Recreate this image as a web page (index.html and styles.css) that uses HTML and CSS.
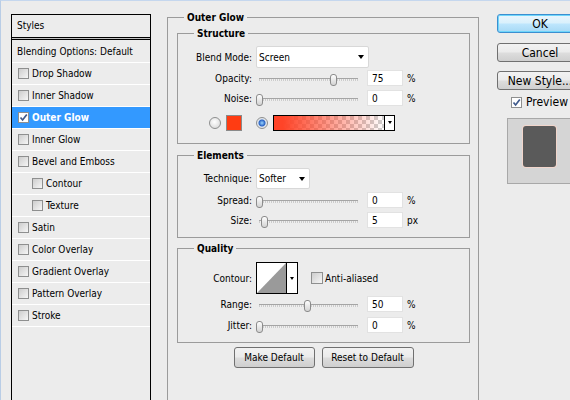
FILE: index.html
```html
<!DOCTYPE html>
<html>
<head>
<meta charset="utf-8">
<link rel="stylesheet" href="styles.css">
</head>
<body>
<div class="dialog">
  <div class="styles-panel">
    <div class="panel-head">Styles</div>
    <div class="panel-rule"></div>
    <ul class="style-list">
      <li class="item item-blend">Blending Options: Default</li>
      <li class="item"><span class="cb"></span>Drop Shadow</li>
      <li class="item"><span class="cb"></span>Inner Shadow</li>
      <li class="item selected"><span class="cb checked"><svg width="9" height="9" viewBox="0 0 9 9"><path d="M1.5 4.5 L3.6 7 L7.8 1.5" fill="none" stroke="#3f5a8c" stroke-width="1.7"/></svg></span>Outer Glow</li>
      <li class="item"><span class="cb"></span>Inner Glow</li>
      <li class="item"><span class="cb"></span>Bevel and Emboss</li>
      <li class="item sub"><span class="cb"></span>Contour</li>
      <li class="item sub"><span class="cb"></span>Texture</li>
      <li class="item"><span class="cb"></span>Satin</li>
      <li class="item"><span class="cb"></span>Color Overlay</li>
      <li class="item"><span class="cb"></span>Gradient Overlay</li>
      <li class="item"><span class="cb"></span>Pattern Overlay</li>
      <li class="item"><span class="cb"></span>Stroke</li>
    </ul>
  </div>

  <div class="main">
    <div class="group outer">
      <div class="group-title">Outer Glow</div>

      <div class="group inner structure">
        <div class="group-title">Structure</div>
        <div class="row row-select">
          <span class="label">Blend Mode:</span>
          <div class="select select-blend"><span>Screen</span><span class="arrow"></span></div>
        </div>
        <div class="row">
          <span class="label">Opacity:</span>
          <div class="slider"><div class="track"></div><div class="thumb" style="left:74px"></div></div>
          <div class="num">75</div><span class="unit">%</span>
        </div>
        <div class="row">
          <span class="label">Noise:</span>
          <div class="slider"><div class="track"></div><div class="thumb" style="left:0px"></div></div>
          <div class="num">0</div><span class="unit">%</span>
        </div>
        <div class="row row-color">
          <span class="radio"></span>
          <span class="swatch"></span>
          <span class="radio on"></span>
          <div class="gradient"><div class="gradient-fill"></div><div class="gradient-btn"><span class="arrow-sm"></span></div></div>
        </div>
      </div>

      <div class="group inner elements">
        <div class="group-title">Elements</div>
        <div class="row row-tech">
          <span class="label">Technique:</span>
          <div class="select select-tech"><span>Softer</span><span class="arrow"></span></div>
        </div>
        <div class="row row-spread">
          <span class="label">Spread:</span>
          <div class="slider"><div class="track"></div><div class="thumb" style="left:0px"></div></div>
          <div class="num">0</div><span class="unit">%</span>
        </div>
        <div class="row">
          <span class="label">Size:</span>
          <div class="slider"><div class="track"></div><div class="thumb" style="left:5px"></div></div>
          <div class="num">5</div><span class="unit">px</span>
        </div>
      </div>

      <div class="group inner quality">
        <div class="group-title">Quality</div>
        <div class="row row-contour">
          <span class="label">Contour:</span>
          <div class="contour">
            <div class="contour-graph"><svg width="29" height="30" viewBox="0 0 29 30"><polygon points="0,30 29,0 29,30" fill="#9a9a9a"/></svg></div>
            <div class="contour-btn"><span class="arrow-sm"></span></div>
          </div>
          <span class="cb cb-lg"></span><span class="check-label">Anti-aliased</span>
        </div>
        <div class="row">
          <span class="label">Range:</span>
          <div class="slider"><div class="track"></div><div class="thumb" style="left:48px"></div></div>
          <div class="num">50</div><span class="unit">%</span>
        </div>
        <div class="row row-jitter">
          <span class="label">Jitter:</span>
          <div class="slider"><div class="track"></div><div class="thumb" style="left:0px"></div></div>
          <div class="num">0</div><span class="unit">%</span>
        </div>
      </div>

      <div class="btn-row">
        <button class="btn btn-make">Make Default</button>
        <button class="btn btn-reset">Reset to Default</button>
      </div>
    </div>
  </div>

  <div class="side">
    <button class="btn side-btn ok">OK</button>
    <button class="btn side-btn cancel">Cancel</button>
    <button class="btn side-btn newstyle">New Style...</button>
    <div class="preview"><span class="cb checked"><svg width="9" height="9" viewBox="0 0 9 9"><path d="M1.5 4.5 L3.6 7 L7.8 1.5" fill="none" stroke="#3f5a8c" stroke-width="1.7"/></svg></span><span>Preview</span></div>
    <div class="preview-box"><div class="preview-shape"></div></div>
  </div>
</div>
</body>
</html>
```

FILE: styles.css
```css
* { box-sizing: border-box; }
html, body { margin: 0; padding: 0; }
body {
  width: 570px;
  height: 400px;
  overflow: hidden;
  background: #ececec;
  border-top: 1px solid #c5d7ee;
  border-left: 1px solid #b9cde6;
  font-family: "DejaVu Sans Condensed", "DejaVu Sans", sans-serif;
  font-stretch: semi-condensed;
  font-size: 10px;
  color: #000;
}

.dialog { display: flex; align-items: flex-start; height: 100%; }

/* left styles list */
.styles-panel {
  flex: none;
  margin: 13px 0 0 10px;
  width: 140px;
  height: 420px;
  border: 1px solid #000;
}
.panel-head { height: 23px; line-height: 22px; padding-left: 5px; border-bottom: 1px solid #000; }
.panel-rule { height: 1px; background: #c0c0c0; }
.style-list { list-style: none; margin: 0; padding: 0; border-top: 1px solid #000; }
.item {
  display: flex;
  align-items: center;
  height: 22px;
  padding-left: 6px;
  border-bottom: 1px solid #fff;
  white-space: nowrap;
}
.item-blend { height: 23px; padding-left: 5px; }
.item.sub { padding-left: 20px; }
.item.selected { background: #3399ff; color: #fff; font-weight: bold; }

.cb {
  flex: none;
  width: 11px;
  height: 11px;
  margin-right: 3px;
  border: 1px solid #8e8f8f;
  background: linear-gradient(135deg, #cdcdcd, #f6f6f6);
}
.cb.checked { background: #fff; display: flex; align-items: center; justify-content: center; }
.cb-lg { width: 12px; height: 12px; margin: 0 2px 0 13px; }

/* main area */
.main { flex: none; margin: 16px 0 0 16px; width: 312px; }
.group { border: 1px solid #9b9b9b; }
.group-title {
  width: fit-content;
  margin-top: -7px;
  padding: 0 3px;
  line-height: 13px;
  font-weight: bold;
  background: #ececec;
  white-space: nowrap;
}
.outer { padding: 0 8px 0 9px; height: 420px; }
.outer > .group-title { margin-left: 7px; }
.inner > .group-title { margin-left: 16px; margin-bottom: 6px; }
.structure { margin-top: 9px; padding-bottom: 12px; }
.elements { margin-top: 11px; padding-bottom: 7px; }
.quality { margin-top: 10px; padding-bottom: 7px; }
.quality > .group-title { margin-bottom: 7px; }

.row { display: flex; align-items: center; height: 20px; white-space: nowrap; }
.row-select { height: 22px; }
.row-tech { height: 21px; }
.row-spread, .row-jitter { margin-top: 1px; }
.row-color { height: 17px; margin-top: 6px; padding-left: 31px; }
.row-contour { height: 32px; }
.label { flex: none; width: 74px; margin-right: 4px; text-align: right; }

.select {
  flex: none;
  display: flex;
  align-items: center;
  justify-content: space-between;
  height: 22px;
  padding: 0 4px 0 2px;
  background: #fff;
  border: 1px solid #d8d8d8;
  border-radius: 2px;
}
.select-blend { width: 113px; }
.select-tech { width: 54px; height: 21px; }
.arrow {
  width: 0; height: 0;
  border-left: 3.5px solid transparent;
  border-right: 3.5px solid transparent;
  border-top: 4px solid #000;
}
.arrow-sm {
  width: 0; height: 0;
  border-left: 2.5px solid transparent;
  border-right: 2.5px solid transparent;
  border-top: 3px solid #000;
}

.slider { flex: none; position: relative; width: 106px; height: 20px; margin-right: 5px; }
.track {
  margin: 10px 0 0 3px;
  width: 99px;
  height: 3px;
  border-top: 1px solid #a5a5a5;
  background: repeating-linear-gradient(90deg, #cccccc 0 1px, #efefef 1px 2px);
}
.thumb {
  position: absolute;
  top: 6px;
  width: 7px;
  height: 12px;
  border: 1px solid #8b8b8b;
  border-radius: 3px;
  background: linear-gradient(#fefefe, #d2d2d2);
}
.num {
  flex: none;
  width: 36px;
  height: 16px;
  padding: 2px 0 0 4px;
  line-height: 12px;
  background: #fff;
  border: 1px solid #e2e2e2;
}
.unit { margin-left: 4px; }

.radio {
  flex: none;
  width: 12px;
  height: 12px;
  border-radius: 50%;
  border: 1px solid #8e8f8f;
  background: radial-gradient(circle at 45% 40%, #ffffff, #d2d2d2);
}
.radio.on { background: radial-gradient(circle at 50% 50%, #9bd6ff 0, #2a63c4 3px, #dfe5ec 4px, #f6f6f6 100%); }
.swatch { flex: none; width: 16px; height: 16px; margin: 0 14px 0 5px; background: #ff3c12; border: 1px solid #8a8a8a; }
.gradient { flex: none; display: flex; width: 122px; height: 16px; margin-left: 5px; border: 1px solid #000; }
.gradient-fill {
  flex: 1;
  background:
    linear-gradient(to right, #ff4428 0%, #ff4428 8%, rgba(255, 68, 40, 0) 100%),
    repeating-conic-gradient(#cfcfcf 0 25%, #ffffff 0 50%) 0 0 / 8px 8px;
}
.gradient-btn { width: 10px; border-left: 1px solid #000; background: #fff; display: flex; align-items: center; justify-content: center; }

.contour { flex: none; display: flex; width: 42px; height: 32px; border: 1px solid #000; background: #fff; }
.contour-graph { width: 29px; }
.contour-graph svg { display: block; }
.contour-btn { width: 11px; border-left: 1px solid #000; display: flex; align-items: center; justify-content: center; }

.btn-row { display: flex; justify-content: center; gap: 7px; margin-top: 4px; }
.btn {
  height: 21px;
  padding: 0;
  font: inherit;
  color: #000;
  border: 1px solid #707070;
  border-radius: 3px;
  background: linear-gradient(#f2f2f2 0%, #ebebeb 48%, #dddddd 52%, #cfcfcf 100%);
  white-space: nowrap;
}
.btn-make { width: 81px; }
.btn-reset { width: 92px; }

/* right column */
.side { flex: none; margin: 13px 0 0 18px; width: 86px; font-size: 12px; }
.side-btn { display: block; width: 86px; height: 19px; font-size: 12px; }
.ok {
  border-color: #3c8fd0;
  box-shadow: inset 0 0 0 1px #6fd6fb;
  background: linear-gradient(#eaf6fd 0%, #d9f0fc 48%, #bee6fd 52%, #a7d9f5 100%);
}
.cancel { margin-top: 10px; }
.newstyle { margin-top: 9px; }
.preview { display: flex; align-items: center; height: 14px; margin-top: 5px; padding-left: 14px; white-space: nowrap; }
.preview .cb { margin-right: 4px; }
.preview-box {
  margin: 9px 0 0 10px;
  width: 80px;
  height: 66px;
  padding: 7px 0 0 15px;
  background: #d5d5d5;
  border: 1px solid #a8a8a8;
}
.preview-shape { width: 33px; height: 41px; background: #5a5a5a; border-radius: 3px; box-shadow: 0 0 0 1px #f1d5cb; }
```
